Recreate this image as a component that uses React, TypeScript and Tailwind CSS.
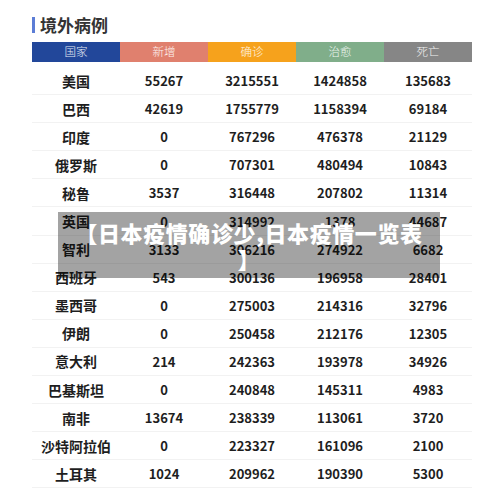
import React from "react";

const rows: [string, string, string, string, string][] = [
  ["美国", "55267", "3215551", "1424858", "135683"],
  ["巴西", "42619", "1755779", "1158394", "69184"],
  ["印度", "0", "767296", "476378", "21129"],
  ["俄罗斯", "0", "707301", "480494", "10843"],
  ["秘鲁", "3537", "316448", "207802", "11314"],
  ["英国", "0", "314992", "1378", "44687"],
  ["智利", "3133", "306216", "274922", "6682"],
  ["西班牙", "543", "300136", "196958", "28401"],
  ["墨西哥", "0", "275003", "214316", "32796"],
  ["伊朗", "0", "250458", "212176", "12305"],
  ["意大利", "214", "242363", "193978", "34926"],
  ["巴基斯坦", "0", "240848", "145311", "4983"],
  ["南非", "13674", "238339", "113061", "3720"],
  ["沙特阿拉伯", "0", "223327", "161096", "2100"],
  ["土耳其", "1024", "209962", "190390", "5300"],
];

const headers = [
  { t: "国家", c: "bg-[#22479a]" },
  { t: "新增", c: "bg-[#e0806e]" },
  { t: "确诊", c: "bg-[#f6a21c]" },
  { t: "治愈", c: "bg-[#80ae8a]" },
  { t: "死亡", c: "bg-[#868686]" },
];

export default function App() {
  return (
    <div
      className="relative w-[500px] h-[492px] bg-white overflow-hidden"
      style={{ fontFamily: '"Noto Sans CJK SC", "Noto Sans", sans-serif' }}
    >
      <div className="pl-[32px] pt-[16px] flex items-center gap-[5px] h-[34px]">
        <div className="w-[3px] h-[16px] bg-[#5c7dd6]" />
        <div className="text-[17px] leading-[18px] font-bold text-[#333]">境外病例</div>
      </div>
      <div className="ml-[32px] mt-[8px] w-[440px]">
        <div className="grid grid-cols-5 h-[20px]">
          {headers.map((h) => (
            <div
              key={h.t}
              className={`${h.c} flex items-center justify-center text-[11.5px] text-white/90 font-light`}
            >
              {h.t}
            </div>
          ))}
        </div>
        <div className="mt-[5px]">
          {rows.map((r) => (
            <div
              key={r[0]}
              className="grid grid-cols-5 h-[28.1px] border-b border-[#f2f2f2] items-center text-[#1e1e1e]"
            >
              <div className="text-center text-[14px] font-bold leading-none">{r[0]}</div>
              {r.slice(1).map((v, i) => (
                <div key={i} className="text-center text-[13px] font-semibold leading-none">
                  {v}
                </div>
              ))}
            </div>
          ))}
        </div>
      </div>
      <div className="absolute left-[58px] top-[212px] w-[382px] h-[66px] bg-black/[0.36] py-[7px] text-center text-white text-[22px] leading-[26px] font-black tracking-[0.6px] whitespace-nowrap">
        【日本疫情确诊少,日本疫情一览表
        <br />】
      </div>
    </div>
  );
}
